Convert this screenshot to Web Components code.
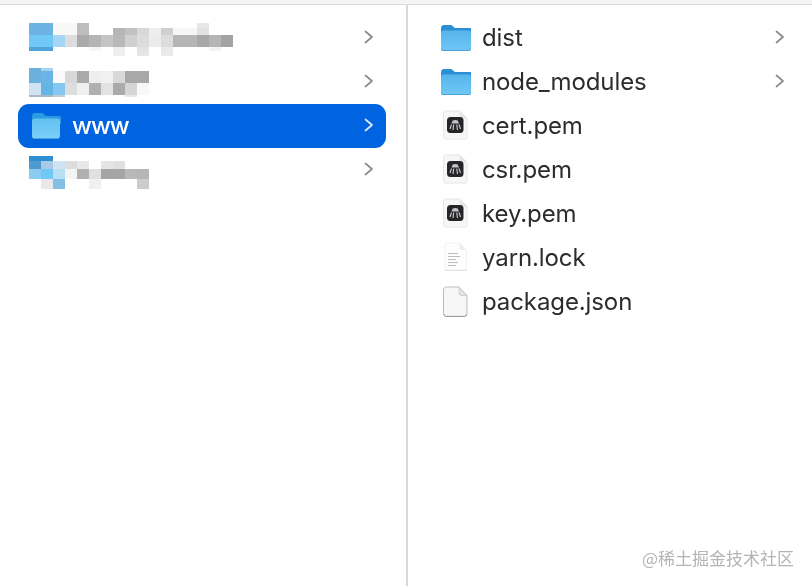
<!DOCTYPE html>
<html lang="zh">
<head>
<meta charset="utf-8">
<title>Finder</title>
<style>
html,body{margin:0;padding:0;background:#fff}
body{width:812px;height:586px;overflow:hidden;font-family:Inter,"Noto Sans CJK SC",sans-serif}
</style>
</head>
<body>
<finder-window>
  <finder-column slot="left" kind="left">
    <finder-row chevron>
      <blur-mosaic slot="mosaic" top="7" heights="5 7 12 4 5" rows="6cb3e3,6cb3e3,f9f9f9,f9f9f9,bdbdbd,-,-,-,-,-,-,-,-,-,e8e8e8,-,-|6cb3e3,6cb3e3,f8f8f8,f8f8f8,bdbdbd,-,-,b5b5b5,c2c2c2,d8d8d8,eeeeee,cfcfcf,f6f6f6,f6f6f6,e2e2e2,-,-|6fc8f5,6fc8f5,a5d6f3,dddddd,aaaaaa,b5b5b5,c5c5c5,b8b8b8,d0d0d0,dcdcdc,ebebeb,dcdcdc,b5b5b5,b5b5b5,a8a8a8,b5b5b5,a3a3a3|4fa3d8,4fa3d8,-,-,-,f6f6f6,-,eeeeee,-,e2e2e2,-,e8e8e8,-,-,-,f4f4f4,-|-,-,-,-,-,-,-,eeeeee,-,e6e6e6,-,eaeaea,-,-,-,-,-"></blur-mosaic>
    </finder-row>
    <finder-row chevron>
      <blur-mosaic slot="mosaic" top="8" heights="3 12 12 2" rows="6cb0de,a8d3ee,-,-,-,-,-,-,-,-|6cb0de,6ab5e5,fafafa,d8d8d8,aaaaaa,eeeeee,f0f0f0,d8d8d8,a8a8a8,a8a8a8|cfe3f2,62b5e5,84c8f2,dddddd,f0f0f0,b0b0b0,e2e2e2,aaaaaa,d5d5d5,f8f8f8|aab8c4,aab8c4,c4ccd2,-,-,-,-,-,e8e8e8,-"></blur-mosaic>
    </finder-row>
    <finder-row chevron selected>
      <folder-icon slot="icon" selected></folder-icon>www
    </finder-row>
    <finder-row chevron>
      <blur-mosaic slot="mosaic" top="8" heights="5 8 10 10" rows="2f8fd0,2f8fd0,-,-,-,-,-,-,-,-|4f9ad0,a8cbe5,d0e3f0,dddddd,e8e8e8,-,e5e5e5,e0e0e0,-,-|8accf2,6fc8f5,b8e0f5,f4f4f4,b0b0b0,e0e0e0,a5a5a5,a5a5a5,b8b8b8,b5b5b5|-,e8e8e8,84bfe5,-,-,f0f0f0,-,-,-,cccccc"></blur-mosaic>
    </finder-row>
  </finder-column>
  <finder-column slot="right" kind="right">
    <finder-row chevron wide><folder-icon slot="icon"></folder-icon>dist</finder-row>
    <finder-row chevron wide><folder-icon slot="icon"></folder-icon>node_modules</finder-row>
    <finder-row wide><file-icon slot="icon" type="cert"></file-icon>cert.pem</finder-row>
    <finder-row wide><file-icon slot="icon" type="cert"></file-icon>csr.pem</finder-row>
    <finder-row wide><file-icon slot="icon" type="cert"></file-icon>key.pem</finder-row>
    <finder-row wide><file-icon slot="icon" type="text"></file-icon>yarn.lock</finder-row>
    <finder-row wide><file-icon slot="icon" type="blank"></file-icon>package.json</finder-row>
  </finder-column>
  <water-mark>@稀土掘金技术社区</water-mark>
</finder-window>
<script>
function shadow(el, html){ el.attachShadow({mode:'open'}).innerHTML = html; }

customElements.define('finder-window', class extends HTMLElement{
  constructor(){ super(); shadow(this, `<style>
    :host{display:grid;grid-template-rows:5px 1fr;width:812px;height:586px;position:relative;background:#fff;color:#2c2c2e}
    .top{background:#f4f4f4;border-bottom:1px solid #dcdcdc;box-sizing:border-box}
    .cols{display:grid;grid-template-columns:408px 1fr;min-height:0}
    .l{border-right:2px solid #d8d8d8;box-sizing:border-box;height:100%}
  </style><div class="top"></div><div class="cols"><div class="l"><slot name="left"></slot></div><div><slot name="right"></slot></div></div><slot></slot>`); }
});

customElements.define('finder-column', class extends HTMLElement{
  constructor(){ super(); shadow(this, `<style>
    :host{display:flex;flex-direction:column;padding-top:11px}
    :host([kind=left]){padding-left:18px;padding-right:20px}
    :host([kind=right]){padding-left:0;padding-right:0}
  </style><slot></slot>`); }
});

customElements.define('finder-row', class extends HTMLElement{
  constructor(){ super(); shadow(this, `<style>
    :host{display:flex;align-items:center;height:44px;font:400 24px/44px Inter,"Noto Sans",sans-serif;letter-spacing:-.1px;border-radius:11px;position:relative;padding-left:11px;padding-right:12px;box-sizing:border-box}
    :host([wide]){padding-left:33px;padding-right:27px}
    :host([selected]){background:#0064e1;color:#fff;font-weight:500;padding-left:13px;letter-spacing:-1px}
    .icon{display:flex;flex:none}
    .icon.has{width:41px}
    .text{flex:1;white-space:nowrap;filter:blur(.3px)}
    .m{flex:1;align-self:stretch;display:flex}
    svg.c{flex:none;width:10px;height:14px;margin-bottom:2px;fill:none;stroke:#8b8b8b;stroke-width:1.7;stroke-linecap:round;stroke-linejoin:round}
    :host([selected]) svg.c{stroke:#dfe9fb}
  </style><div class="icon"><slot name="icon"></slot></div><div class="m"><slot name="mosaic"></slot></div><div class="text"><slot></slot></div><svg class="c" viewBox="0 0 10 14"><path d="M1.5 1.5 8 7 1.5 12.5"/></svg>`);
    const i=this.shadowRoot.querySelector('.icon');
    if(this.querySelector('[slot=icon]')) i.classList.add('has');
    const m=this.shadowRoot.querySelector('.m');
    if(!this.querySelector('[slot=mosaic]')) m.style.display='none';
    if(!this.hasAttribute('chevron')) this.shadowRoot.querySelector('svg.c').style.display='none';
  }
});

let fid=0;
customElements.define('folder-icon', class extends HTMLElement{
  constructor(){ super();
    const sel=this.hasAttribute('selected');
    const id='g'+(++fid);
    const x=sel?1:0, w=sel?28:30;
    shadow(this, `<style>:host{display:block;width:30px;height:28px}svg{display:block;filter:blur(.3px)}</style>
    <svg width="30" height="28" viewBox="0 0 30 28">
      <defs><linearGradient id="${id}" x1="0" y1="0" x2="0" y2="1">
        <stop offset="0" stop-color="${sel?'#62c0f2':'#56b5ec'}"/><stop offset="1" stop-color="${sel?'#79cff8':'#6fc6f5'}"/>
      </linearGradient></defs>
      <path d="M${x} 4.500C${x} 2.800 ${x+1} 1 ${x+2.800} 1h6.400c1.200 0 1.900.4 2.600 1.100l1 1.100c.5.5 1 .8 1.800.8h${w-15.800}c1.600 0 2.800 1.100 2.800 2.800V12H${x}z" fill="${sel?'#2a9be0':'#2b8fd6'}"/>
      <rect x="${x}" y="6.600" width="${w}" height="20.400" rx="2.600" fill="#3f97d2"/>
      <rect x="${x}" y="6.600" width="${w}" height="19.600" rx="2.600" fill="url(#${id})"/>
    </svg>`); }
});

customElements.define('file-icon', class extends HTMLElement{
  constructor(){ super();
    const t=this.getAttribute('type');
    let inner='';
    if(t==='cert') inner=`
      <path d="M1.500 3C1.500 1.800 2.300 1 3.500 1h14.200L25 8.300V27c0 1.200-.8 2-2 2H3.500c-1.200 0-2-.8-2-2z" fill="#f6f6f6" stroke="#e6e6e6"/>
      <path d="M17.700 1v5.300c0 1.200.8 2 2 2H25z" fill="#e6e6e6"/>
      <rect x="5" y="7" width="16.500" height="16" rx="3.500" fill="#262628"/>
      <path d="M9.500 13.500h7.500l-1.200-3c-1.500-.8-3.600-.8-5.100 0z" fill="#c4c4c6"/>
      <path d="M9.500 14.500 8 19M11.700 14.500 11 20M14.800 14.500 15.500 20M17 14.500 18.500 19" fill="none" stroke="#c4c4c6" stroke-width="1.200"/>`;
    if(t==='text') inner=`
      <path d="M3 3C3 2 3.600 1 5 1h12.500L24.500 8v20H3z" fill="#fdfdfd" stroke="#f1f1f1"/>
      <path d="M17.500 1v7h7z" fill="#efefef"/>
      <path d="M3 28.500h21.500" stroke="#e2e2e2"/>
      <path d="M6 11.500h10M6 14.500h12M6 17.500h8M6 20.500h10M6 23.500h8" stroke="#bdbdbd" stroke-width="1"/>`;
    if(t==='blank') inner=`
      <path d="M1.500 4C1.500 2.200 2.700 1 4.500 1h12.500L25 9.500V27.500c0 1.800-1.200 3-3 3H4.500c-1.800 0-3-1.200-3-3z" fill="#f7f7f7" stroke="#bcbcbc" stroke-width="1"/>
      <path d="M1.800 28c.4 1.600 1.400 2.400 2.700 2.400H22c1.300 0 2.300-.8 2.700-2.400" fill="none" stroke="#9a9a9a" stroke-width="1"/>
      <path d="M17 1v6.200c0 1.400.9 2.300 2.300 2.300H25z" fill="#e3e3e3" stroke="#c4c4c4" stroke-width=".7"/>`;
    shadow(this, `<style>:host{display:block;width:26px;height:32px;margin-left:1px}svg{display:block;filter:blur(.3px)}</style>
    <svg width="26" height="32" viewBox="0 0 26 32">${inner}</svg>`); }
});

customElements.define('blur-mosaic', class extends HTMLElement{
  constructor(){ super();
    const rows=this.getAttribute('rows').split('|').map(r=>r.split(','));
    const h=this.getAttribute('heights').split(' ');
    const cells=rows.flat().map(c=>`<i style="background:${c==='-'?'transparent':'#'+c}"></i>`).join('');
    shadow(this, `<style>
      :host{display:grid;grid-template-columns:repeat(${rows[0].length},12px);grid-template-rows:${h.map(x=>x+'px').join(' ')};align-self:flex-start;margin-top:${this.getAttribute('top')}px;filter:blur(.7px)}
      i{display:block}
    </style>${cells}`); }
});

customElements.define('water-mark', class extends HTMLElement{
  constructor(){ super(); shadow(this, `<style>
    :host{position:absolute;right:18px;bottom:18px;font:400 17px/20px "Noto Sans CJK SC",sans-serif;color:#b4b4b4;white-space:nowrap;filter:blur(.4px)}
  </style><slot></slot>`); }
});
</script>
</body>
</html>
